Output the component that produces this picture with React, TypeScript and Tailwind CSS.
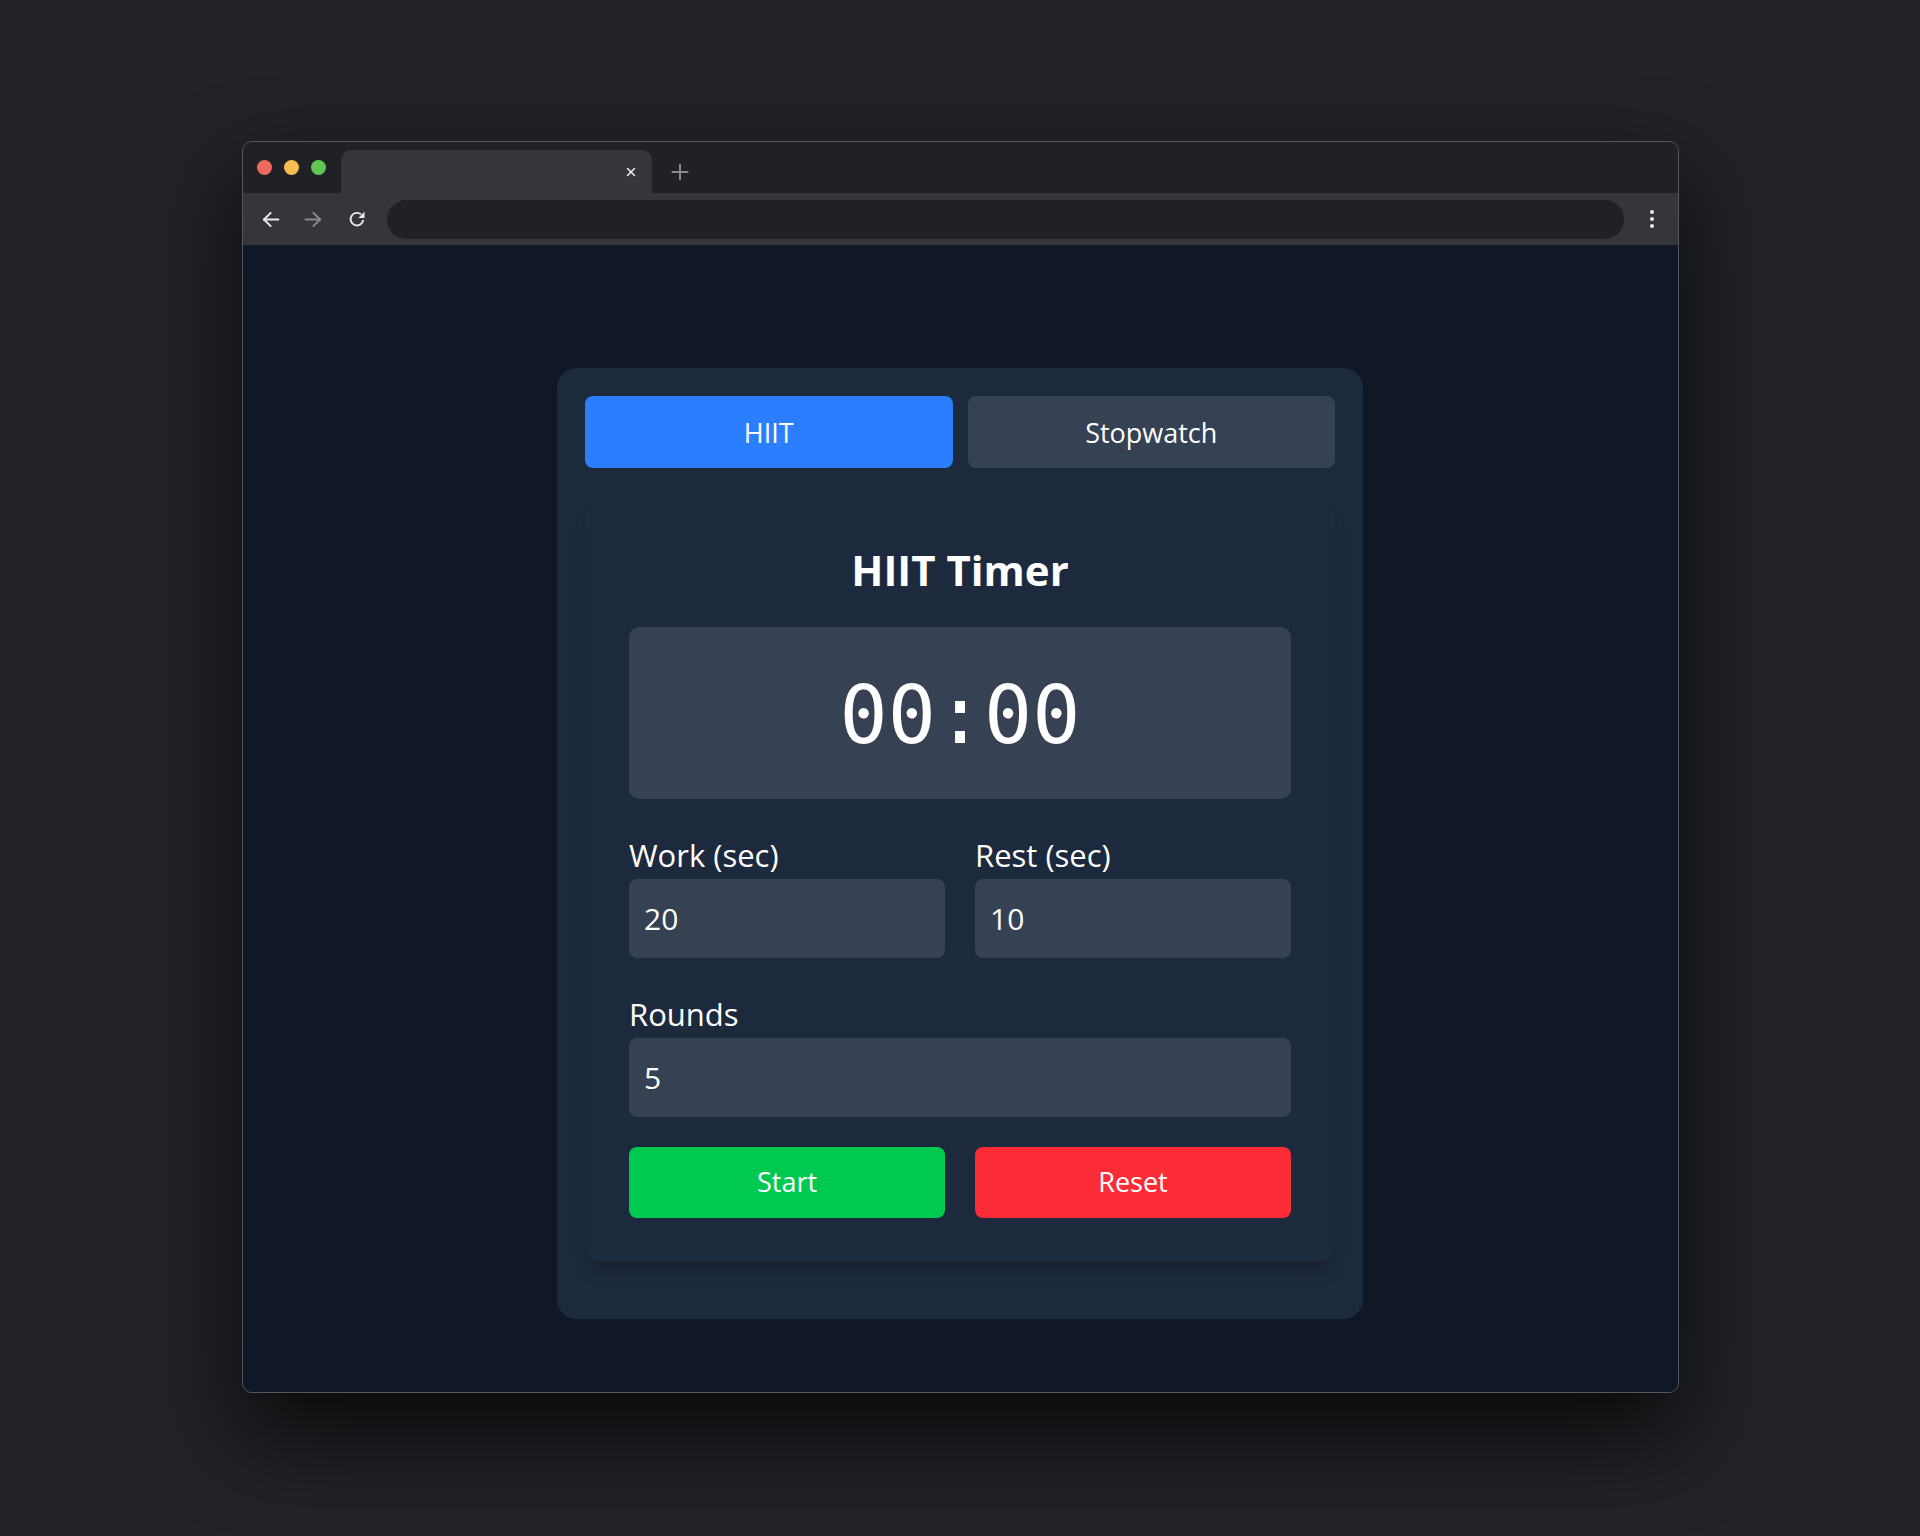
import { X, Plus } from "lucide-react";

function TrafficLights() {
  return (
    <div className="flex items-center gap-[12px] self-center pl-[14px]">
      <span className="h-[15px] w-[15px] rounded-full bg-[#ee6a5f]" />
      <span className="h-[15px] w-[15px] rounded-full bg-[#f5be4f]" />
      <span className="h-[15px] w-[15px] rounded-full bg-[#62c554]" />
    </div>
  );
}

function BackIcon() {
  return (
    <svg width="19" height="19" viewBox="0 0 16 16" fill="none" stroke="#e8eaed" strokeWidth="1.6" strokeLinecap="square">
      <path d="M14.5 8H2.5" />
      <path d="M8 2.5L2.5 8L8 13.5" />
    </svg>
  );
}

function ForwardIcon() {
  return (
    <svg width="19" height="19" viewBox="0 0 16 16" fill="none" stroke="#8a8b8e" strokeWidth="1.6" strokeLinecap="square">
      <path d="M1.5 8H13.5" />
      <path d="M8 2.5L13.5 8L8 13.5" />
    </svg>
  );
}

function ReloadIcon() {
  return (
    <svg width="20" height="20" viewBox="0 0 20 20" fill="none">
      <path d="M16.2 11a6.3 6.3 0 1 1-2.1-5.6" stroke="#e8eaed" strokeWidth="1.9" />
      <path d="M17.5 2.8V9H11.3Z" fill="#e8eaed" />
    </svg>
  );
}

function Field({ label, value }: { label: string; value: string }) {
  return (
    <label className="flex flex-col">
      <span className="mb-[4px] text-[31px] leading-[40px] text-white">{label}</span>
      <input
        readOnly
        value={value}
        className="h-[79px] w-full rounded-[8px] bg-[#364153] px-[15px] text-[30px] text-white outline-none"
      />
    </label>
  );
}

export default function App() {
  return (
    <div
      className="min-h-screen bg-[#212327] pt-[141px]"
      style={{ fontFamily: '"Open Sans", "Noto Sans", sans-serif' }}
    >
      <div className="mx-auto flex h-[1252px] w-[1437px] flex-col overflow-hidden rounded-[10px] border border-[#55585e] shadow-[0_40px_90px_rgba(0,0,0,0.75)]">
        {/* tab strip */}
        <div className="flex h-[51px] shrink-0 bg-[#202124]">
          <TrafficLights />
          <div className="ml-[15px] mt-[8px] flex h-[43px] w-[311px] items-center justify-end rounded-t-[10px] bg-[#35363a] pr-[14px]">
            <X size={14} strokeWidth={2.6} color="#e8eaed" />
          </div>
          <div className="ml-[15px] mt-[8px] flex items-center">
            <Plus size={26} strokeWidth={1.8} color="#8a8b8e" />
          </div>
        </div>

        {/* toolbar */}
        <div className="flex h-[52px] shrink-0 items-center bg-[#35363a] pl-[18px] pr-[24px]">
          <div className="flex items-center gap-[24px]">
            <BackIcon />
            <ForwardIcon />
            <ReloadIcon />
          </div>
          <div className="ml-[20px] h-[39px] flex-1 rounded-full bg-[#202124]" />
          <div className="ml-[26px] flex flex-col items-center gap-[3px]">
            <span className="h-[4px] w-[4px] rounded-full bg-[#e8eaed]" />
            <span className="h-[4px] w-[4px] rounded-full bg-[#e8eaed]" />
            <span className="h-[4px] w-[4px] rounded-full bg-[#e8eaed]" />
          </div>
        </div>

        {/* page */}
        <div className="flex flex-1 justify-center bg-[#101828] pt-[123px]">
          <div className="flex h-[951px] w-[806px] flex-col rounded-[20px] bg-[#1d293d] p-[28px]">
            <div className="grid grid-cols-2 gap-[15px]">
              <button className="h-[72px] rounded-[8px] bg-[#2b7fff] pt-[3px] text-[27px] text-white">HIIT</button>
              <button className="h-[72px] rounded-[8px] bg-[#364153] pt-[3px] text-[27px] text-white">Stopwatch</button>
            </div>

            <div className="mt-[33px] rounded-[14px] bg-[#1d293d] p-[44px] shadow-[0_12px_18px_-4px_rgba(0,0,0,0.18),0_5px_8px_-5px_rgba(0,0,0,0.18)]">
              <h2 className="text-center text-[42px] font-bold leading-[50px] text-white">HIIT Timer</h2>

              <div className="mt-[32px] flex h-[172px] items-center justify-center rounded-[10px] bg-[#364153] pt-[5px]">
                <span
                  className="text-[80px] leading-none text-white"
                  style={{ fontFamily: '"DejaVu Sans Mono", monospace' }}
                >
                  00:00
                </span>
              </div>

              <div className="mt-[36px] grid grid-cols-2 gap-[30px]">
                <Field label="Work (sec)" value="20" />
                <Field label="Rest (sec)" value="10" />
              </div>

              <div className="mt-[36px]">
                <Field label="Rounds" value="5" />
              </div>

              <div className="mt-[30px] grid grid-cols-2 gap-[30px]">
                <button className="h-[71px] rounded-[8px] bg-[#00c951] text-[27px] text-white">Start</button>
                <button className="h-[71px] rounded-[8px] bg-[#fb2c36] text-[27px] text-white">Reset</button>
              </div>
            </div>
          </div>
        </div>
      </div>
    </div>
  );
}
